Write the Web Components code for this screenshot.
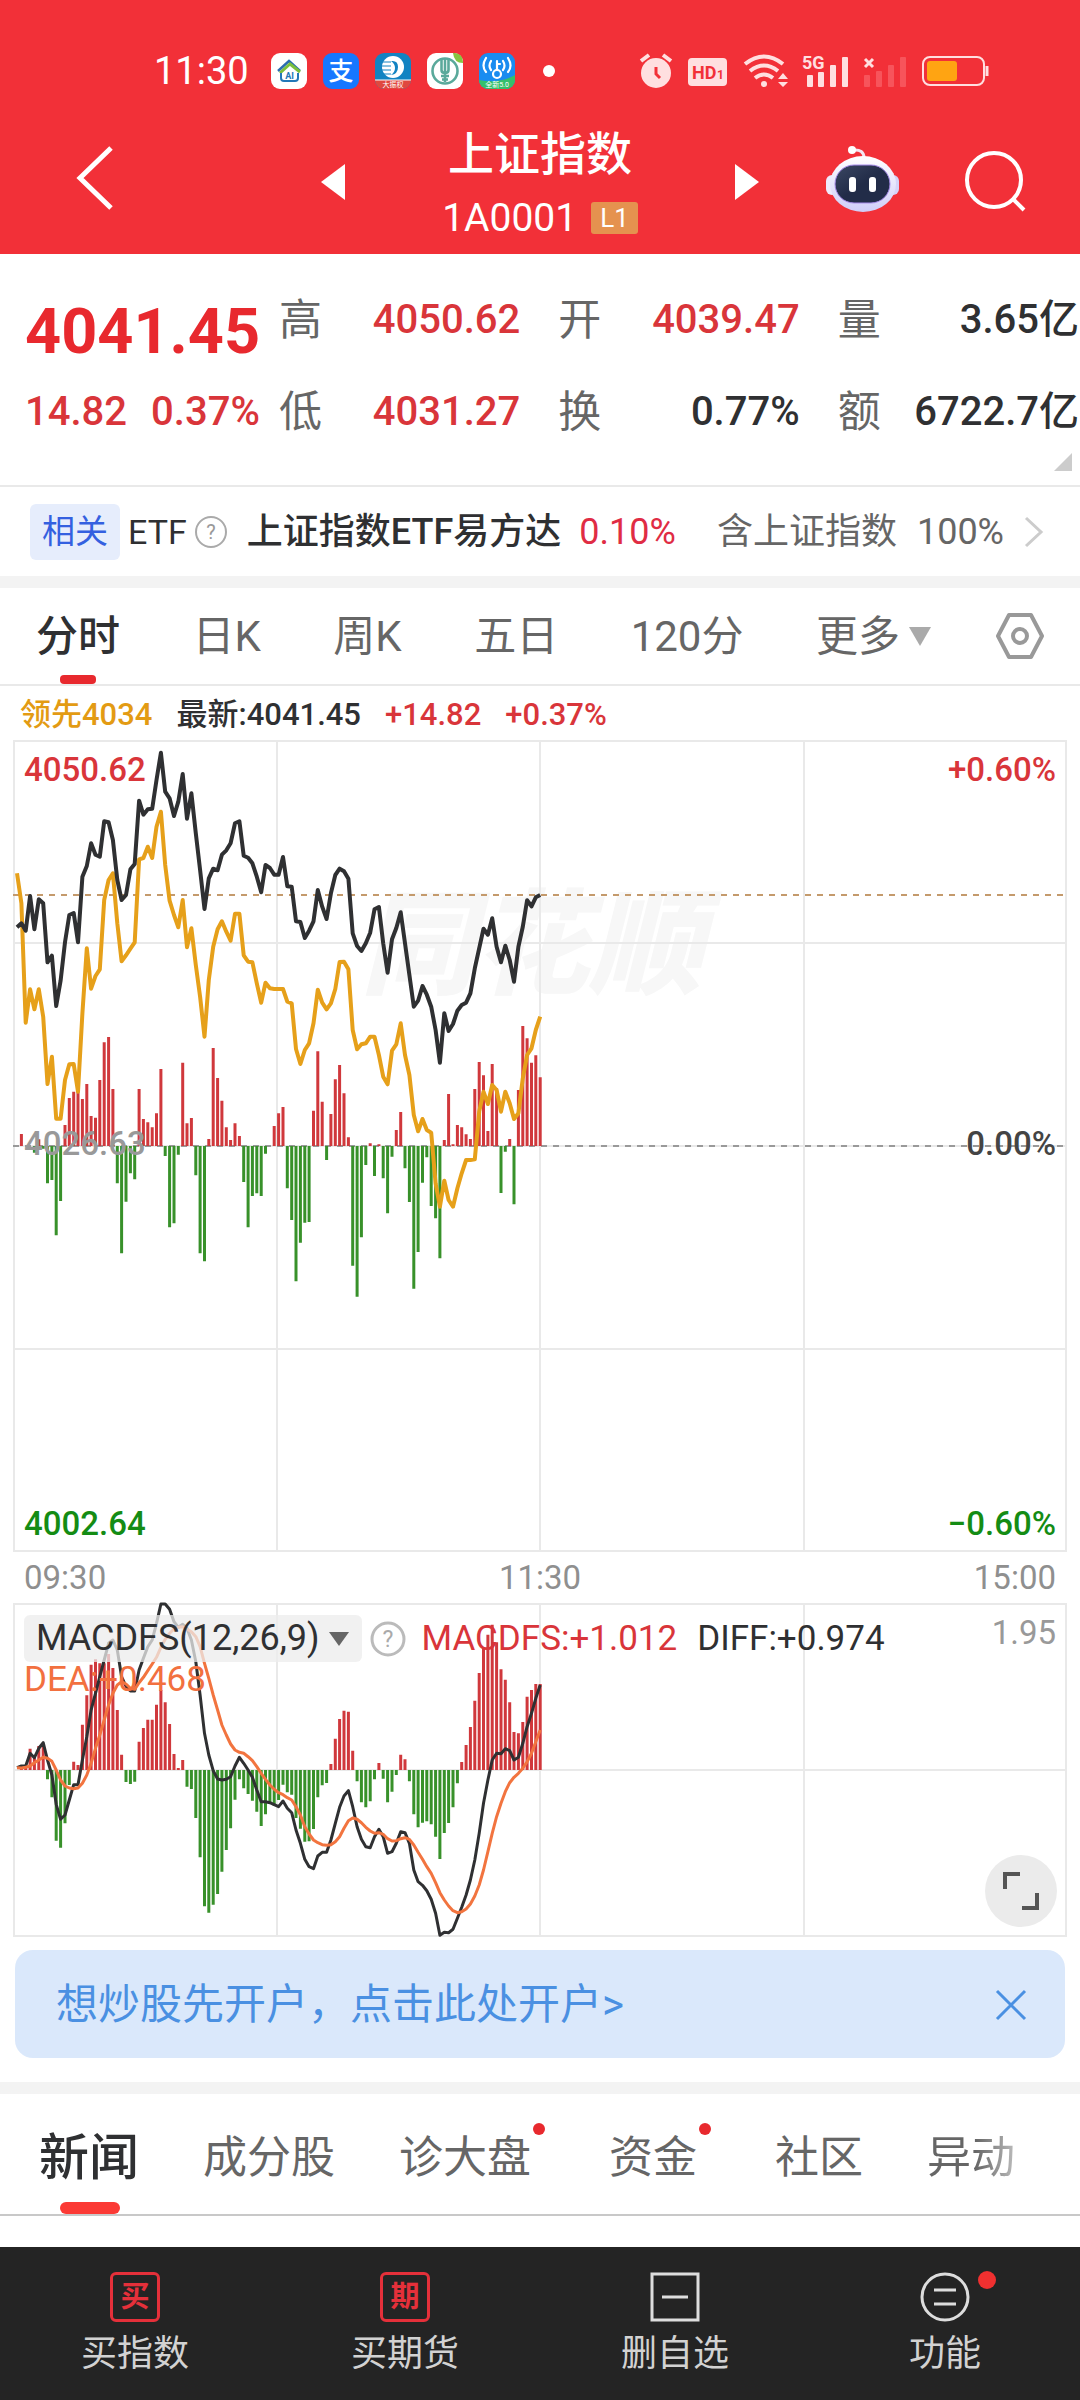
<!DOCTYPE html>
<html lang="zh-CN">
<head>
<meta charset="utf-8">
<meta name="viewport" content="width=device-width, initial-scale=1">
<title>上证指数</title>
<style>
    :root {
        --red: #f23038;
        --up: #d9353a;
        --down: #148c14;
        --ink: #2f3032;
        --muted: #666;
        --faint: #999;
        --line: #e9e9e9;
        --band: #f3f3f3;
    }
    body {
        margin: 0;
        min-height: 100vh;
        display: flex;
        flex-direction: column;
        background: #fff;
        color: var(--ink);
        font-family: Roboto, "Noto Sans CJK SC", sans-serif;
    }
    main { flex: 1; }
</style>
</head>
<body>
    <quote-header name="上证指数" code="1A0001" level="L1">
        <status-bar slot="status" time="11:30"></status-bar>
    </quote-header>
    <main>
        <quote-panel></quote-panel>
        <etf-row></etf-row>
        <period-tabs></period-tabs>
        <time-chart></time-chart>
        <macd-chart></macd-chart>
        <ad-banner>想炒股先开户，点击此处开户&gt;</ad-banner>
        <news-tabs></news-tabs>
    </main>
    <bottom-nav>
        <nav-item label="买指数"><span slot="icon" class="stamp">买</span></nav-item>
        <nav-item label="买期货"><span slot="icon" class="stamp">期</span></nav-item>
        <nav-item label="删自选">
            <svg slot="icon" width="50" height="50" viewBox="0 0 50 50" fill="none" stroke="#ddd" stroke-width="3"><path d="M2 2h46v46H2zM12 25h26"/></svg>
        </nav-item>
        <nav-item label="功能" badge>
            <svg slot="icon" width="50" height="50" viewBox="0 0 50 50" fill="none" stroke="#ddd" stroke-width="3"><circle cx="25" cy="25" r="23"/><path d="M14 18h22M14 32h22"/></svg>
        </nav-item>
    </bottom-nav>

<script>
const BASE = /*css*/`
    :host, * { box-sizing: border-box; }
    button { margin: 0; padding: 0; border: 0; background: none; font: inherit; color: inherit; cursor: pointer; }
    a { color: inherit; text-decoration: none; }
    svg { display: block; flex: none; overflow: visible; }
`;

class BaseElement extends HTMLElement {
    constructor() {
        super();
        this.attachShadow({ mode: 'open' });
    }
    connectedCallback() {
        this.shadowRoot.innerHTML = `<style>${BASE}${this.styles()}</style>${this.render()}`;
    }
    styles() { return ''; }
    render() { return ''; }
}

// status-bar
class StatusBar extends BaseElement {
    styles() {
        return /*css*/`
            :host { display: flex; justify-content: space-between; align-items: center; height: 76px; padding: 0 91px 0 154px; }
            div { display: flex; align-items: center; gap: 16px; }
            .signals { gap: 15px; }
            .time { font-size: 38px; line-height: 40px; margin-right: 6px; }
            .dot { width: 12px; height: 12px; border-radius: 6px; background: #fff; margin-left: 12px; }
        `;
    }
    render() {
        return /*html*/`
        <div>
            <span class="time">${this.getAttribute('time')}</span>
            <svg width="36" height="36" viewBox="0 0 36 36">
                <rect width="36" height="36" rx="9" fill="#fff"/>
                <path d="M7 18 18 8l11 10" fill="none" stroke="#2b6cb0" stroke-width="2.5"/>
                <path d="M9 20 19 11l10 8" fill="none" stroke="#7bbf3c" stroke-width="3"/>
                <path d="M10 20v5q0 3 3 3h11q3 0 3-3v-5" fill="none" stroke="#2277b8" stroke-width="2"/>
                <text x="18.5" y="26" font-size="9" font-weight="700" text-anchor="middle" fill="#2277b8">AI</text>
            </svg>
            <svg width="36" height="36" viewBox="0 0 36 36">
                <rect width="36" height="36" rx="9" fill="#1677ff"/>
                <text x="18" y="27" font-size="25" font-weight="500" text-anchor="middle" fill="#fff">支</text>
            </svg>
            <svg width="36" height="36" viewBox="0 0 36 36">
                <clipPath id="c1"><rect width="36" height="36" rx="9"/></clipPath>
                <g clip-path="url(#c1)">
                    <rect width="36" height="36" fill="#1283c2"/>
                    <path d="M0 27h36v9H0z" fill="#e0483e"/>
                    <path d="M0 27h36" stroke="#fff"/>
                    <circle cx="18" cy="14" r="11" fill="#fff"/>
                    <path d="M16 8q7-1 7 6t-7 8q4-3 4-7t-4-7z" fill="#1283c2"/>
                    <path d="M6 9h10M6 13h10M6 17h10M6 21h10" stroke="#1283c2"/>
                </g>
                <text x="18" y="34" font-size="7" text-anchor="middle" fill="#fff">大振权</text>
            </svg>
            <svg width="36" height="36" viewBox="0 0 36 36">
                <rect width="36" height="36" rx="9" fill="#fff"/>
                <circle cx="18" cy="18" r="12.5" fill="none" stroke="#5aa99b" stroke-width="2.6"/>
                <path d="M18 5v24M14.500 5v12q0 3 3.500 3t3.500-3V5M14 23h8M15 26.500h6" fill="none" stroke="#5aa99b" stroke-width="2.6"/>
                <path d="M26 0h2q8 1 8 9v1q-9 0-10-10z" fill="#86c440"/>
            </svg>
            <svg width="36" height="36" viewBox="0 0 36 36">
                <clipPath id="c2"><rect width="36" height="36" rx="9"/></clipPath>
                <g clip-path="url(#c2)">
                    <rect width="36" height="36" fill="#1a8cf0"/>
                    <path d="M0 27q20 4 36-5v14H0z" fill="#35bf6b"/>
                    <g fill="none" stroke="#fff" stroke-width="2.2" stroke-linecap="round">
                        <circle cx="18" cy="21" r="4"/><path d="M18 17V8M18 11h3M12 8q-3 5 0 9M24 8q3 5 0 9M7 5q-5 8 0 14M29 5q5 8 0 14"/>
                    </g>
                </g>
                <text x="18" y="34" font-size="7" text-anchor="middle" fill="#fff">全新5.0</text>
            </svg>
            <span class="dot"></span>
        </div>
        <div class="signals">
            <svg width="34" height="36" viewBox="0 0 34 36">
                <circle cx="17" cy="20" r="15" fill="#ffdfe0"/>
                <path d="M2 8l8-6M32 8l-8-6" stroke="#ffdfe0" stroke-width="4"/>
                <path d="M17 14v7l4 4" fill="none" stroke="#f23038" stroke-width="3"/>
            </svg>
            <svg width="40" height="36" viewBox="0 0 40 36">
                <rect y="5" width="39" height="28" rx="4" fill="#ffdfe0"/>
                <text x="4" y="26" font-size="18" font-weight="700" fill="#f23038">HD</text>
                <text x="29" y="26" font-size="12" font-weight="700" fill="#f23038">1</text>
            </svg>
            <svg width="44" height="36" viewBox="0 0 44 36">
                <g fill="none" stroke="#ffdfe0" stroke-width="4"><path d="M2 11q19-15 38 0M7 18q14-11 28 0M12 25q9-7 18 0"/></g>
                <circle cx="21" cy="31" r="3" fill="#ffdfe0"/>
                <path d="M40 20l5 6H35zM40 34l5-5H35z" fill="#ffdfe0"/>
            </svg>
            <svg width="47" height="36" viewBox="0 0 47 36" fill="#ffdfe0">
                <text x="0" y="16" font-size="18" font-weight="700">5G</text>
                <rect x="5" y="22" width="6" height="12" rx="1"/><rect x="16" y="19" width="6" height="15" rx="1"/><rect x="28" y="12" width="6" height="22" rx="1"/><rect x="40" y="4" width="6" height="30" rx="1"/>
            </svg>
            <svg width="43" height="36" viewBox="0 0 43 36" fill="#f7545b">
                <path d="M1 6l8 8M9 6l-8 8" stroke="#ffdfe0" stroke-width="3"/>
                <rect y="22" width="6" height="12" rx="1"/><rect x="12" y="18" width="6" height="16" rx="1"/><rect x="24" y="12" width="6" height="22" rx="1"/><rect x="36" y="4" width="6" height="30" rx="1"/>
            </svg>
            <svg width="67" height="36" viewBox="0 0 67 36">
                <rect x="1" y="4" width="61" height="28" rx="7" fill="none" stroke="#ffdfe0" stroke-width="2"/>
                <rect x="5" y="8" width="30" height="20" rx="3" fill="#ffa412"/>
                <path d="M65 13v10" stroke="#ffdfe0" stroke-width="3"/>
            </svg>
        </div>`;
    }
}
customElements.define('status-bar', StatusBar);

// quote-header
class QuoteHeader extends BaseElement {
    styles() {
        return /*css*/`
            :host { display: block; background: var(--red); color: #fff; padding-top: 33px; }
            .bar { display: grid; grid-template-columns: 1fr 438px 1fr; align-items: center; height: 145px; }
            .left { padding: 0 0 4px 76px; }
            .right { display: flex; align-items: center; justify-content: flex-end; gap: 66px; padding: 0 54px 4px 0; }
            .mid { display: flex; align-items: center; justify-content: space-between; }
            .title { display: flex; flex-direction: column; align-items: center; gap: 4px; padding-top: 4px; }
            h1 { margin: 0; font-size: 46px; line-height: 64px; font-weight: 500; }
            .code { display: flex; align-items: center; gap: 14px; font-size: 39px; line-height: 56px; }
            .code b { font-weight: 400; font-size: 26px; line-height: 32px; padding: 0 9px; border-radius: 3px; background: #e5924f; }
        `;
    }
    render() {
        return /*html*/`
        <slot name="status"></slot>
        <div class="bar">
            <div class="left">
                <button aria-label="返回"><svg width="38" height="64" viewBox="0 0 38 64" fill="none" stroke="#fff" stroke-width="5"><path d="M35 2 4 32l31 30"/></svg></button>
            </div>
            <div class="mid">
                <button aria-label="上一个"><svg width="24" height="36" viewBox="0 0 24 36" fill="#fff"><path d="M24 0v36L0 18z"/></svg></button>
                <div class="title">
                    <h1>${this.getAttribute('name')}</h1>
                    <div class="code">${this.getAttribute('code')}<b>${this.getAttribute('level')}</b></div>
                </div>
                <button aria-label="下一个"><svg width="24" height="36" viewBox="0 0 24 36" fill="#fff"><path d="M0 0v36l24-18z"/></svg></button>
            </div>
            <div class="right">
                <button aria-label="智能助手">
                    <svg width="74" height="68" viewBox="0 0 74 68">
                        <defs>
                            <linearGradient id="h" x1="0" y1="0" x2="0" y2="1"><stop offset="0" stop-color="#fff"/><stop offset="1" stop-color="#cfcdf8"/></linearGradient>
                            <linearGradient id="v" x1="0" y1="0" x2="1" y2="1"><stop offset="0" stop-color="#3b4763"/><stop offset=".5" stop-color="#222c48"/></linearGradient>
                        </defs>
                        <path d="M27 4q11-1 11 8" fill="none" stroke="#f3e6f2" stroke-width="3"/>
                        <circle cx="26" cy="4" r="4" fill="#fff"/>
                        <rect x="0" y="29" width="12" height="20" rx="6" fill="#eeeafc"/>
                        <rect x="61" y="29" width="12" height="20" rx="6" fill="#d5d3f8"/>
                        <ellipse cx="37" cy="38" rx="33" ry="28" fill="url(#h)"/>
                        <rect x="9" y="19" width="55" height="38" rx="19" fill="url(#v)" stroke="#a78bea" stroke-width="1"/>
                        <rect x="23" y="31" width="7" height="15" rx="3" fill="#fff"/>
                        <rect x="43" y="31" width="7" height="15" rx="3" fill="#fff"/>
                    </svg>
                </button>
                <button aria-label="搜索"><svg width="60" height="60" viewBox="0 0 60 60" fill="none" stroke="#fff" stroke-width="4"><circle cx="28" cy="30" r="27"/><path d="M47 49l11 11"/></svg></button>
            </div>
        </div>`;
    }
}
customElements.define('quote-header', QuoteHeader);

// quote-panel
const QUOTES = [
    ['高', '4050.62', 'up'], ['开', '4039.47', 'up'], ['量', '3.65亿', ''],
    ['低', '4031.27', 'up'], ['换', '0.77%', ''], ['额', '6722.7亿', '']
];
class QuotePanel extends BaseElement {
    styles() {
        return /*css*/`
            :host { display: flex; position: relative; height: 233px; padding: 20px 1px 0 25px; border-bottom: 2px solid var(--line); font-weight: 500; }
            .last { width: 254px; color: var(--up); }
            .price { font-size: 63px; line-height: 92px; font-weight: 700; color: #e8292e; padding-top: 12px; margin-bottom: -12px; }
            .diff { display: flex; gap: 24px; font-size: 40px; line-height: 92px; }
            dl { flex: 1; margin: 0; display: grid; grid-template-columns: repeat(3, 1fr); column-gap: 38px; align-content: start; }
            dl div { display: flex; justify-content: space-between; line-height: 92px; white-space: nowrap; }
            dt { font-size: 43px; font-weight: 400; color: var(--muted); }
            dd { margin: 0; font-size: 40px; }
            .up { color: var(--up); }
            .more { position: absolute; right: 8px; bottom: 14px; }
        `;
    }
    render() {
        return /*html*/`
        <div class="last">
            <div class="price">4041.45</div>
            <div class="diff"><span>14.82</span><span>0.37%</span></div>
        </div>
        <dl>${QUOTES.map(([k, v, c]) => `<div><dt>${k}</dt><dd class="${c}">${v}</dd></div>`).join('')}</dl>
        <svg class="more" width="18" height="18" viewBox="0 0 18 18" fill="#ccc"><path d="M18 0v18H0z"/></svg>`;
    }
}
customElements.define('quote-panel', QuotePanel);

// etf-row
class EtfRow extends BaseElement {
    styles() {
        return /*css*/`
            :host { display: block; border-bottom: 12px solid var(--band); }
            a { display: flex; align-items: center; height: 89px; padding: 0 36px 0 30px; font-size: 36px; line-height: 56px; white-space: nowrap; }
            .tag { padding: 0 12px; margin-right: 8px; border-radius: 6px; background: #e6edfc; color: #3460e0; font-size: 33px; }
            .kind { font-size: 34px; margin-right: 8px; }
            .name { font-weight: 500; margin: 0 18px 0 20px; }
            .up { color: #e02c44; }
            .share { display: flex; gap: 20px; margin-left: auto; margin-right: 20px; color: var(--muted); }
        `;
    }
    render() {
        return /*html*/`
        <a href="#etf">
            <span class="tag">相关</span><span class="kind">ETF</span>
            <svg width="32" height="32" viewBox="0 0 32 32"><circle cx="16" cy="16" r="15" fill="none" stroke="#aaa" stroke-width="2"/><text x="16" y="23" font-size="20" text-anchor="middle" fill="#999">?</text></svg>
            <span class="name">上证指数ETF易方达</span><span class="up">0.10%</span>
            <span class="share"><span>含上证指数</span><span>100%</span></span>
            <svg width="20" height="32" viewBox="0 0 20 32" fill="none" stroke="#ccc" stroke-width="3"><path d="M2 2l15 14L2 30"/></svg>
        </a>`;
    }
}
customElements.define('etf-row', EtfRow);

// period-tabs
class PeriodTabs extends BaseElement {
    styles() {
        return /*css*/`
            :host { display: flex; align-items: center; gap: 64px; height: 98px; padding: 0 36px; border-bottom: 2px solid var(--line); color: var(--muted); }
            nav { flex: 1; display: flex; justify-content: space-between; font-size: 42px; line-height: 94px; }
            button { position: relative; display: flex; align-items: center; gap: 8px; }
            nav button { padding-top: 2px; }
            .on { color: var(--ink); font-weight: 500; }
            .on::after { content: ""; position: absolute; left: 24px; right: 24px; bottom: 0; height: 9px; border-radius: 4px; background: #e8292e; }
        `;
    }
    render() {
        return /*html*/`
        <nav>
            <button class="on">分时</button><button>日K</button><button>周K</button><button>五日</button><button>120分</button>
            <button>更多<svg width="24" height="20" viewBox="0 0 24 20" fill="#aaa"><path d="M1 0h22L12 19z"/></svg></button>
        </nav>
        <button aria-label="设置"><svg width="48" height="46" viewBox="0 0 48 46" fill="none" stroke="#999" stroke-width="4" stroke-linejoin="round"><path d="M13 2h22l11 21-11 21H13L2 23z"/><circle cx="24" cy="23" r="7"/></svg></button>`;
    }
}
customElements.define('period-tabs', PeriodTabs);

// Minute series, 09:30 to 11:30, one value per minute, in thirds of a pixel from the top of the plot.
const PRICE = [562,550,572,468,568,478,490,667,647,798,722,607,525,519,607,410,378,310,344,350,244,247,300,420,480,465,388,372,182,224,208,206,120,38,155,175,228,185,102,236,160,280,390,507,415,386,391,344,331,310,250,244,347,353,370,410,457,375,384,404,404,351,439,440,544,546,594,572,544,450,500,537,460,405,386,394,416,580,618,633,610,578,508,501,610,698,598,564,517,610,705,800,782,738,764,800,870,968,820,873,852,812,795,788,760,685,625,566,584,535,620,667,617,660,725,620,560,481,499,472,465];
const LEAD = [400,490,848,748,808,748,830,1032,950,1136,1136,1020,973,972,1055,820,625,746,708,688,480,420,400,550,664,646,626,607,358,354,320,354,260,215,375,482,525,562,480,622,565,675,770,890,720,620,568,544,575,602,521,521,646,665,667,730,788,728,745,747,747,747,785,790,927,972,930,910,850,749,788,808,790,747,666,665,688,870,928,913,910,890,890,945,1010,1033,932,913,850,945,1005,1125,1174,1137,1170,1178,1330,1400,1322,1380,1400,1345,1300,1260,1260,1258,1115,1055,1092,1035,1050,1115,1055,1090,1137,1120,1015,945,925,870,830];
const FLOW = [0,36,0,0,-20,20,-8,-112,-102,-268,-165,63,144,163,163,141,186,90,85,198,311,327,171,-112,-322,-167,-82,-100,171,81,71,56,98,231,-30,-244,-232,-26,250,68,84,-88,-322,-346,21,294,204,136,56,18,68,30,-108,-244,-150,-142,-150,-23,0,60,98,117,-127,-222,-406,-290,-230,-228,106,284,133,-42,96,200,243,158,26,-359,-452,-274,-57,8,-90,5,-97,-202,-32,48,102,-67,-168,-428,-318,-110,-34,-180,-217,-337,18,156,5,63,56,35,21,171,252,212,45,246,173,-141,-17,21,-175,168,360,323,250,272,206];
const MACD = [0,3,10,64,40,72,72,-28,-82,-212,-233,-160,-45,25,15,136,224,316,332,320,320,348,306,180,46,-36,-42,-35,85,126,151,151,196,240,203,138,48,6,30,-50,-57,-144,-262,-409,-428,-404,-372,-305,-240,-175,-89,-28,-55,-72,-92,-125,-168,-133,-100,-107,-90,-44,-67,-74,-144,-176,-215,-214,-177,-82,-46,-39,18,94,153,178,175,58,-34,-97,-112,-94,-28,21,-26,-97,-65,-15,46,32,-34,-133,-172,-158,-154,-163,-200,-267,-189,-159,-112,-40,24,75,129,208,291,368,406,436,383,302,271,203,114,110,144,220,240,258,258];
const DIFF = [494,489,489,451,464,436,419,471,516,604,649,636,591,545,545,471,401,321,271,221,171,121,111,141,221,251,264,264,201,166,131,111,61,3,3,19,56,73,64,76,111,176,276,391,456,503,528,531,529,521,489,463,481,501,523,561,596,596,599,605,611,594,616,629,681,721,769,791,797,759,748,748,711,661,613,579,563,611,671,709,731,734,701,679,701,751,746,721,686,689,721,801,836,847,863,889,931,997,988,989,979,946,913,876,831,771,691,601,531,471,451,452,437,443,471,463,421,371,331,286,246];
const DEA = [494,495,493,489,479,471,463,466,475,501,531,549,555,557,555,541,516,481,436,396,351,306,271,246,236,243,256,259,239,223,203,183,163,133,109,91,78,73,71,78,86,101,131,181,226,276,321,366,396,423,441,448,451,461,473,491,511,529,546,559,569,575,584,591,611,636,671,693,711,719,725,727,725,716,701,676,653,645,649,659,673,684,691,689,694,707,714,713,707,704,709,726,748,769,791,811,839,869,891,909,923,929,926,918,903,879,846,801,746,691,641,601,566,539,523,511,496,476,451,416,381];

const xAt = i => (4 + i * 4.36).toFixed(1);
const line = (data, color, width) =>
    `<polyline points="${data.map((v, i) => `${xAt(i)},${(v / 3).toFixed(1)}`).join(' ')}" fill="none" stroke="${color}" stroke-width="${width}" stroke-linejoin="round"/>`;
const bars = (data, zero, width) => {
    const path = sign => data.map((v, i) => v * sign > 0 ? `M${xAt(i)} ${zero}v${(-v / 3).toFixed(1)}` : '').join('');
    return `<path d="${path(1)}" stroke="#d0383c" stroke-width="${width}"/><path d="${path(-1)}" stroke="#38912a" stroke-width="${width}"/>`;
};
const grid = (h, rows) => {
    let d = `M1 1h1052v${h - 2}H1z`;
    for (let i = 1; i < 4; i++) d += `M${Math.round(i * 263.5)} 1v${h - 2}`;
    for (let i = 1; i < rows; i++) d += `M1 ${h / rows * i}h1052`;
    return `<path d="${d}" fill="none" stroke="#e9e9e9" stroke-width="2"/>`;
};

// time-chart
class TimeChart extends BaseElement {
    styles() {
        return /*css*/`
            :host { display: block; padding: 0 13px; font-size: 33px; line-height: 40px; font-weight: 500; }
            .legend { display: flex; gap: 24px; padding: 4px 0 0 7px; font-size: 31px; line-height: 50px; }
            .plot { position: relative; }
            .plot svg { position: relative; width: 100%; height: 812px; }
            .plot span { position: absolute; }
            .plot .mark { left: 33%; top: 146px; font-size: 114px; line-height: 120px; font-weight: 900; font-style: italic; color: #f7f7f7; }
            .tl, .ml, .bl { left: 11px; }
            .tr, .mr, .br { right: 11px; }
            .tl, .tr { top: 10px; }
            .ml, .mr { top: 384px; }
            .bl, .br { bottom: 8px; }
            .ml { color: var(--faint); }
            .mr { color: #444; }
            .up { color: var(--up); }
            .down { color: var(--down); }
            .lead { color: #e39b13; }
            .axis { display: flex; justify-content: space-between; padding: 0 11px; line-height: 51px; font-weight: 400; color: #8f8f8f; }
        `;
    }
    render() {
        return /*html*/`
        <div class="legend">
            <span class="lead">领先4034</span><span>最新:4041.45</span><span class="up">+14.82</span><span class="up">+0.37%</span>
        </div>
        <div class="plot">
            <span class="mark">同花顺</span>
            <svg viewBox="0 0 1054 812" preserveAspectRatio="none">
                ${grid(812, 4)}
                <path d="M0 155h1050" stroke="#c49a6c" stroke-width="2" stroke-dasharray="6 6"/>
                <path d="M0 406h1050" stroke="#999" stroke-width="2" stroke-dasharray="6 6"/>
                ${bars(FLOW, 406, 3)}
                ${line(LEAD, '#e6a01a', 4)}
                ${line(PRICE, '#2f3032', 4)}
            </svg>
            <span class="tl up">4050.62</span><span class="tr up">+0.60%</span>
            <span class="ml">4026.63</span><span class="mr">0.00%</span>
            <span class="bl down">4002.64</span><span class="br down">−0.60%</span>
        </div>
        <div class="axis"><span>09:30</span><span>11:30</span><span>15:00</span></div>`;
    }
}
customElements.define('time-chart', TimeChart);

// macd-chart
class MacdChart extends BaseElement {
    styles() {
        return /*css*/`
            :host { display: block; position: relative; margin: 0 13px; font-size: 35px; }
            .plot { width: 100%; height: 334px; }
            .legend { position: absolute; left: 11px; right: 11px; top: 12px; }
            .row { display: flex; align-items: center; line-height: 47px; }
            .pill { display: flex; align-items: center; gap: 9px; padding: 0 13px 0 12px; border-radius: 6px; background: rgba(236, 236, 236, .75); color: var(--ink); margin-right: 8px; font-size: 36px; line-height: 47px; }
            .macd { color: var(--up); margin: 0 20px 0 16px; }
            .max { margin-left: auto; font-size: 33px; line-height: 36px; align-self: flex-start; color: var(--faint); }
            .dea { line-height: 36px; color: #f2703f; }
            .full { position: absolute; right: 10px; bottom: 10px; width: 72px; height: 72px; border-radius: 50%; background: #ebebeb; display: grid; place-items: center; }
        `;
    }
    render() {
        return /*html*/`
        <svg class="plot" viewBox="0 0 1054 334" preserveAspectRatio="none">
            ${grid(334, 2)}
            ${bars(MACD, 167, 3)}
            ${line(DIFF, '#2f3032', 3)}
            ${line(DEA, '#f2743f', 3)}
        </svg>
        <div class="legend">
            <div class="row">
                <button class="pill">MACDFS(12,26,9)<svg width="20" height="14" viewBox="0 0 20 14" fill="#666"><path d="M0 0h20L10 14z"/></svg></button>
                <svg width="36" height="36" viewBox="0 0 36 36"><circle cx="18" cy="18" r="16" fill="none" stroke="#bbb" stroke-width="3"/><text x="18" y="26" font-size="23" text-anchor="middle" fill="#aaa">?</text></svg>
                <span class="macd">MACDFS:+1.012</span><span>DIFF:+0.974</span>
                <span class="max">1.95</span>
            </div>
            <div class="dea">DEA:+0.468</div>
        </div>
        <button class="full" aria-label="全屏"><svg width="40" height="40" viewBox="0 0 40 40" fill="none" stroke="#555" stroke-width="4"><path d="M4 18V3h15M36 22v15H21"/></svg></button>`;
    }
}
customElements.define('macd-chart', MacdChart);

// ad-banner
class AdBanner extends BaseElement {
    styles() {
        return /*css*/`
            :host { display: flex; align-items: center; justify-content: space-between; height: 108px; margin: 13px 15px 24px; padding: 2px 38px 0 41px; border-radius: 18px; background: #dae8fb; color: #4a90e2; font-size: 42px; line-height: 60px; }
        `;
    }
    render() {
        return /*html*/`
        <a href="#open"><slot></slot></a>
        <button aria-label="关闭"><svg width="32" height="32" viewBox="0 0 32 32" fill="none" stroke="#4a90e2" stroke-width="3"><path d="M2 2l28 28M30 2 2 30"/></svg></button>`;
    }
}
customElements.define('ad-banner', AdBanner);

// news-tabs
class NewsTabs extends BaseElement {
    styles() {
        return /*css*/`
            :host { display: block; border-top: 12px solid var(--band); padding-bottom: 31px; }
            nav { display: flex; gap: 64px; height: 122px; padding-left: 39px; border-bottom: 2px solid #c8c8c8; font-size: 44px; line-height: 112px; color: var(--muted); white-space: nowrap; }
            button { position: relative; display: flex; padding-top: 8px; }
            .on { font-size: 50px; font-weight: 500; color: var(--ink); }
            .on::after { content: ""; position: absolute; left: 21px; right: 19px; bottom: 0; height: 12px; border-radius: 6px; background: #fb3a35; }
            .new::after { content: ""; width: 12px; height: 12px; margin: 21px 0 0 2px; border-radius: 6px; background: #e8292e; }
            .fade { background: linear-gradient(90deg, #666 55%, #bbb); background-clip: text; -webkit-background-clip: text; color: transparent; }
        `;
    }
    render() {
        return /*html*/`
        <nav>
            <button class="on">新闻</button><button>成分股</button><button class="new">诊大盘</button><button class="new">资金</button><button>社区</button><button class="fade">异动</button>
        </nav>`;
    }
}
customElements.define('news-tabs', NewsTabs);

// bottom-nav
class BottomNav extends BaseElement {
    styles() {
        return /*css*/`
            :host { display: grid; grid-template-columns: repeat(4, 1fr); height: 153px; background: #242424; color: #d2d2d2; }
        `;
    }
    render() { return '<slot></slot>'; }
}
customElements.define('bottom-nav', BottomNav);

class NavItem extends BaseElement {
    styles() {
        return /*css*/`
            :host { display: flex; justify-content: center; }
            button { display: flex; flex-direction: column; align-items: center; gap: 6px; padding-top: 25px; font-size: 36px; line-height: 52px; }
            .icon { position: relative; height: 50px; }
            :host([badge]) .icon::after { content: ""; position: absolute; left: 58px; top: -1px; width: 18px; height: 18px; border-radius: 9px; background: #f03030; }
            ::slotted(.stamp) { display: grid; place-items: center; box-sizing: border-box; width: 50px; height: 50px; border: 3px solid #e5303a; border-radius: 6px; color: #e5303a; font-size: 29px; line-height: 40px; font-weight: 700; }
            ::slotted(svg) { display: block; }
        `;
    }
    render() {
        return `<button><span class="icon"><slot name="icon"></slot></span>${this.getAttribute('label')}</button>`;
    }
}
customElements.define('nav-item', NavItem);
</script>
</body>
</html>
